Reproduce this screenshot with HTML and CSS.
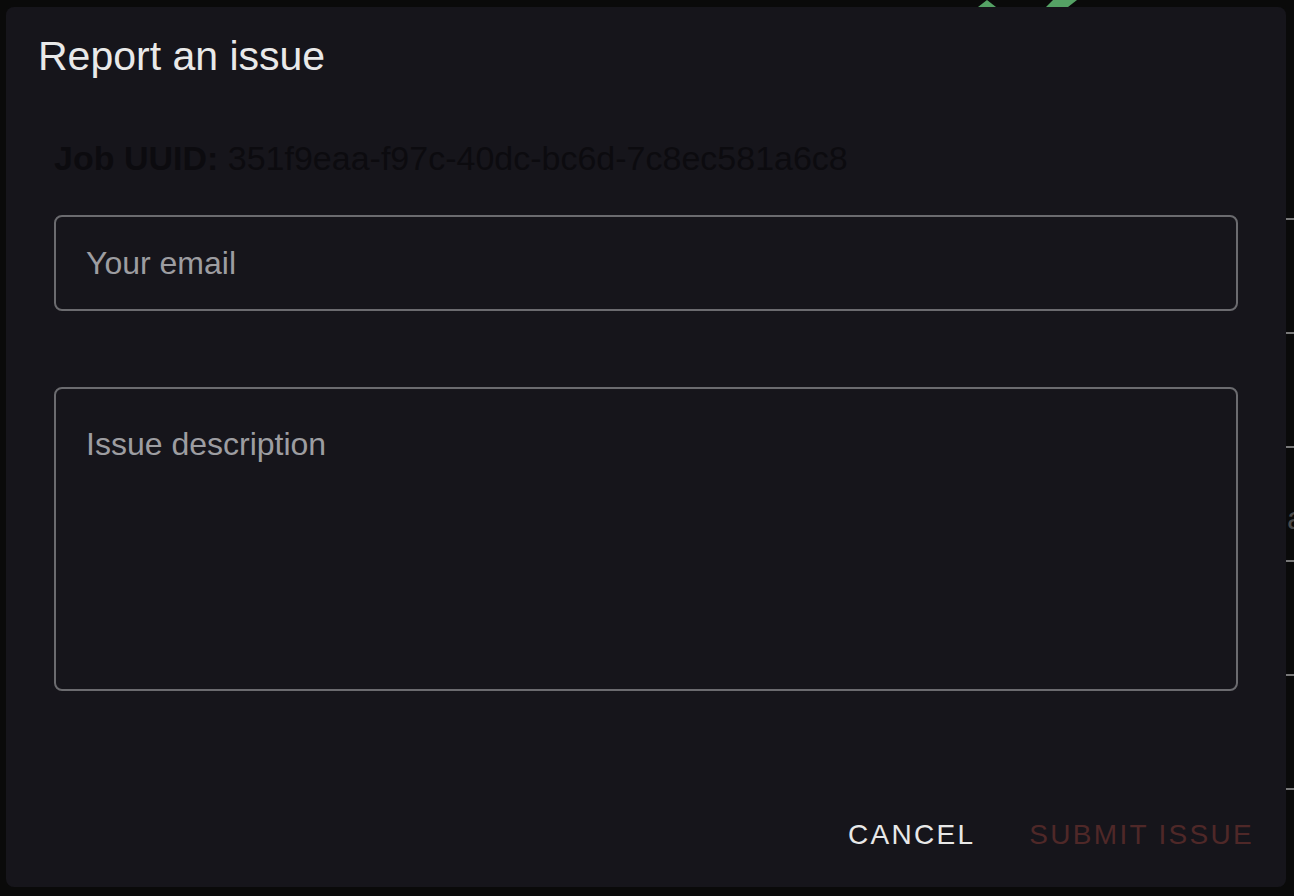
FILE: index.html
```html
<html>
    <head>
        <title>Report an issue</title>
        <link rel="stylesheet" href="styles.css">
    </head>
    <body>
        <div class="page-behind">
            <svg class="logo-peek" width="120" height="10" viewBox="0 0 120 10">
                <polygon points="18,7 27,0 36,7" fill="#55a265"/>
                <polygon points="86,7 93,0 117,0 108,7" fill="#55a265"/>
            </svg>
            <div class="table-edge">
                <div class="row"></div>
                <div class="row"></div>
                <div class="row"><span>a</span></div>
                <div class="row"></div>
                <div class="row"></div>
                <div class="row"></div>
            </div>
        </div>

        <div class="dialog">
            <h2 class="dialog-title">Report an issue</h2>
            <div class="dialog-content">
                <p class="job-id"><b>Job UUID:</b> 351f9eaa-f97c-40dc-bc6d-7c8ec581a6c8</p>
                <div class="field">
                    <input class="field-input" type="email" placeholder="Your email">
                </div>
                <div class="field field-multi">
                    <textarea class="field-input" placeholder="Issue description"></textarea>
                </div>
            </div>
            <div class="dialog-actions">
                <button class="btn btn-cancel">Cancel</button>
                <button class="btn btn-submit" disabled>Submit issue</button>
            </div>
        </div>
    </body>
</html>
```

FILE: styles.css
```css
body
{
    margin: 0;
    background-color: #0a0a0a;
    font-family: "Liberation Sans", Arial, sans-serif;
    overflow: hidden;
}

/* page under the modal backdrop */
.page-behind
{
    position: absolute;
    top: 0;
    left: 0;
    width: 1294px;
    height: 896px;
    z-index: 0;
}

.logo-peek
{
    position: absolute;
    left: 960px;
    top: 0;
}

.table-edge
{
    position: absolute;
    left: 1286px;
    top: 218px;
    width: 8px;
}

.table-edge .row
{
    height: 112px;
    border-top: 2px solid #787878;
    position: relative;
}

.table-edge .row span
{
    position: absolute;
    left: 1px;
    top: 50px;
    font-size: 32px;
    line-height: 40px;
    color: #4a4a4a;
}

/* dialog */
.dialog
{
    position: relative;
    z-index: 1;
    box-sizing: border-box;
    margin: 7px 0 0 6px;
    width: 1280px;
    height: 880px;
    border-radius: 8px;
    background-color: #16151b;
    display: flex;
    flex-direction: column;
}

.dialog-title
{
    margin: 0;
    padding: 17px 32px 0;
    font-size: 41px;
    font-weight: 400;
    line-height: 64px;
    color: #e9e9e9;
}

.dialog-content
{
    padding: 0 48px;
}

.job-id
{
    margin: 46px 0 0;
    font-size: 34px;
    line-height: 48px;
    color: #0c0b0f;
}

.field
{
    margin-top: 33px;
}

.field-multi
{
    margin-top: 76px;
}

.field-input
{
    display: block;
    box-sizing: border-box;
    width: 100%;
    height: 96px;
    margin: 0;
    padding: 0 30px;
    border: 2px solid #6b6b6f;
    border-radius: 8px;
    background: transparent;
    font-family: "Liberation Sans", Arial, sans-serif;
    font-size: 32px;
    color: #e9e9e9;
    outline: none;
}

textarea.field-input
{
    height: 304px;
    padding: 32px 30px;
    line-height: 46px;
    resize: none;
}

.field-input::placeholder
{
    color: #9d9da1;
    opacity: 1;
}

.dialog-actions
{
    margin-top: auto;
    padding: 16px;
    display: flex;
    justify-content: flex-end;
    gap: 22px;
}

.btn
{
    padding: 12px 16px;
    border: none;
    background: none;
    font-family: "Liberation Sans", Arial, sans-serif;
    font-size: 28px;
    line-height: 49px;
    letter-spacing: 2.3px;
    text-transform: uppercase;
    cursor: pointer;
}

.btn-cancel
{
    color: #e8e8e8;
}

.btn-submit
{
    color: #4f2828;
    cursor: default;
}
```
